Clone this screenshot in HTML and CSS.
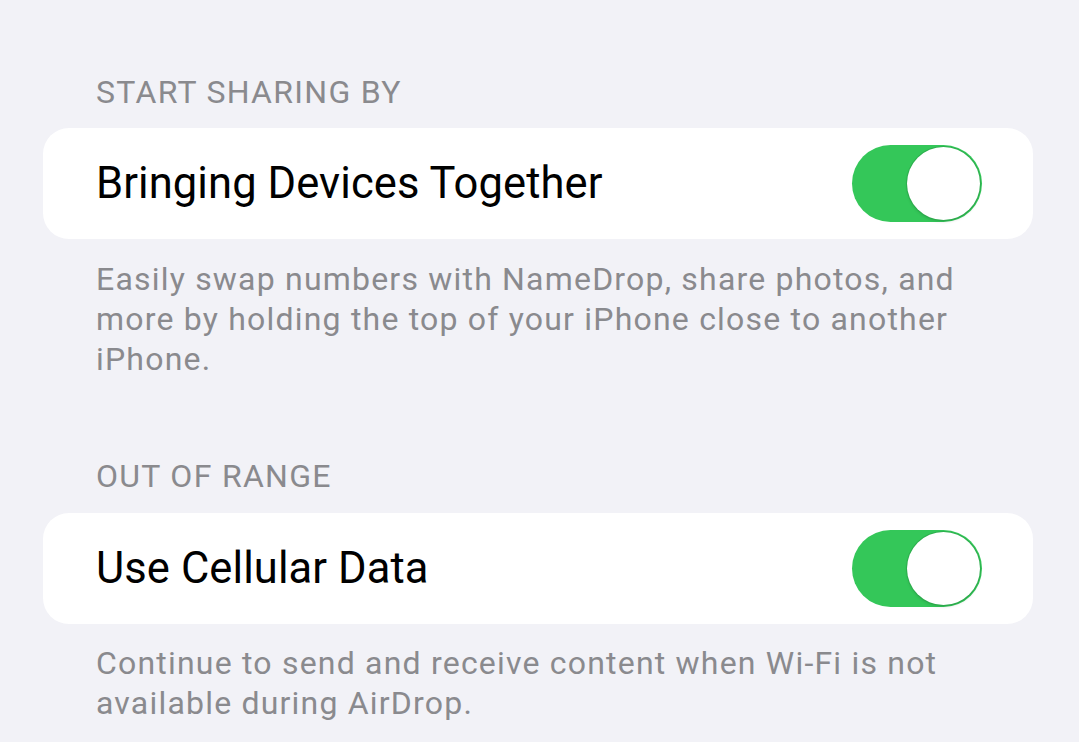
FILE: index.html
```html
<!DOCTYPE html>
<html lang="en">
<head>
<meta charset="utf-8">
<title>AirDrop</title>
<link rel="stylesheet" href="styles.css">
</head>
<body>
<main class="page">
  <section class="group">
    <div class="group-header">START SHARING BY</div>
    <div class="card">
      <span class="row-title">Bringing Devices Together</span>
      <span class="switch on"><span class="knob"></span></span>
    </div>
    <p class="group-footer">Easily swap numbers with NameDrop, share photos, and more by holding the top of your iPhone close to another iPhone.</p>
  </section>
  <section class="group second">
    <div class="group-header">OUT OF RANGE</div>
    <div class="card">
      <span class="row-title">Use Cellular Data</span>
      <span class="switch on"><span class="knob"></span></span>
    </div>
    <p class="group-footer">Continue to send and receive content when Wi-Fi is not available during AirDrop.</p>
  </section>
</main>
</body>
</html>
```

FILE: styles.css
```css
html, body {
  margin: 0;
  padding: 0;
  background: #f2f2f7;
}
body {
  font-family: Roboto, "Liberation Sans", sans-serif;
  width: 1079px;
  height: 742px;
  overflow: hidden;
}
.page {
  padding: 73.5px 46px 0 43px;
}
.group-header {
  font-size: 32px;
  line-height: 36px;
  letter-spacing: 1.3px;
  color: #8a8a8e;
  padding-left: 53px;
  margin-bottom: 18.5px;
}
.card {
  background: #ffffff;
  border-radius: 26px;
  height: 111px;
  display: flex;
  align-items: center;
  justify-content: space-between;
  padding: 0 51px 0 53px;
}
.row-title {
  font-size: 43.5px;
  letter-spacing: 0.1px;
  color: #000000;
}
.switch {
  width: 130px;
  height: 77px;
  border-radius: 39px;
  background: #34c759;
  position: relative;
  display: block;
}
.knob {
  position: absolute;
  right: 2px;
  top: 2px;
  width: 73px;
  height: 73px;
  border-radius: 50%;
  background: #ffffff;
  box-shadow: 0 0 0 1px rgba(40, 160, 70, 0.6), 0 2px 3px rgba(0, 0, 0, 0.12);
}
.group-footer {
  margin: 19.5px 0 0 0;
  padding: 0 40px 0 53px;
  font-size: 32px;
  line-height: 40px;
  letter-spacing: 1.2px;
  color: #8a8a8e;
}
.group.second {
  margin-top: 79.5px;
}
```
